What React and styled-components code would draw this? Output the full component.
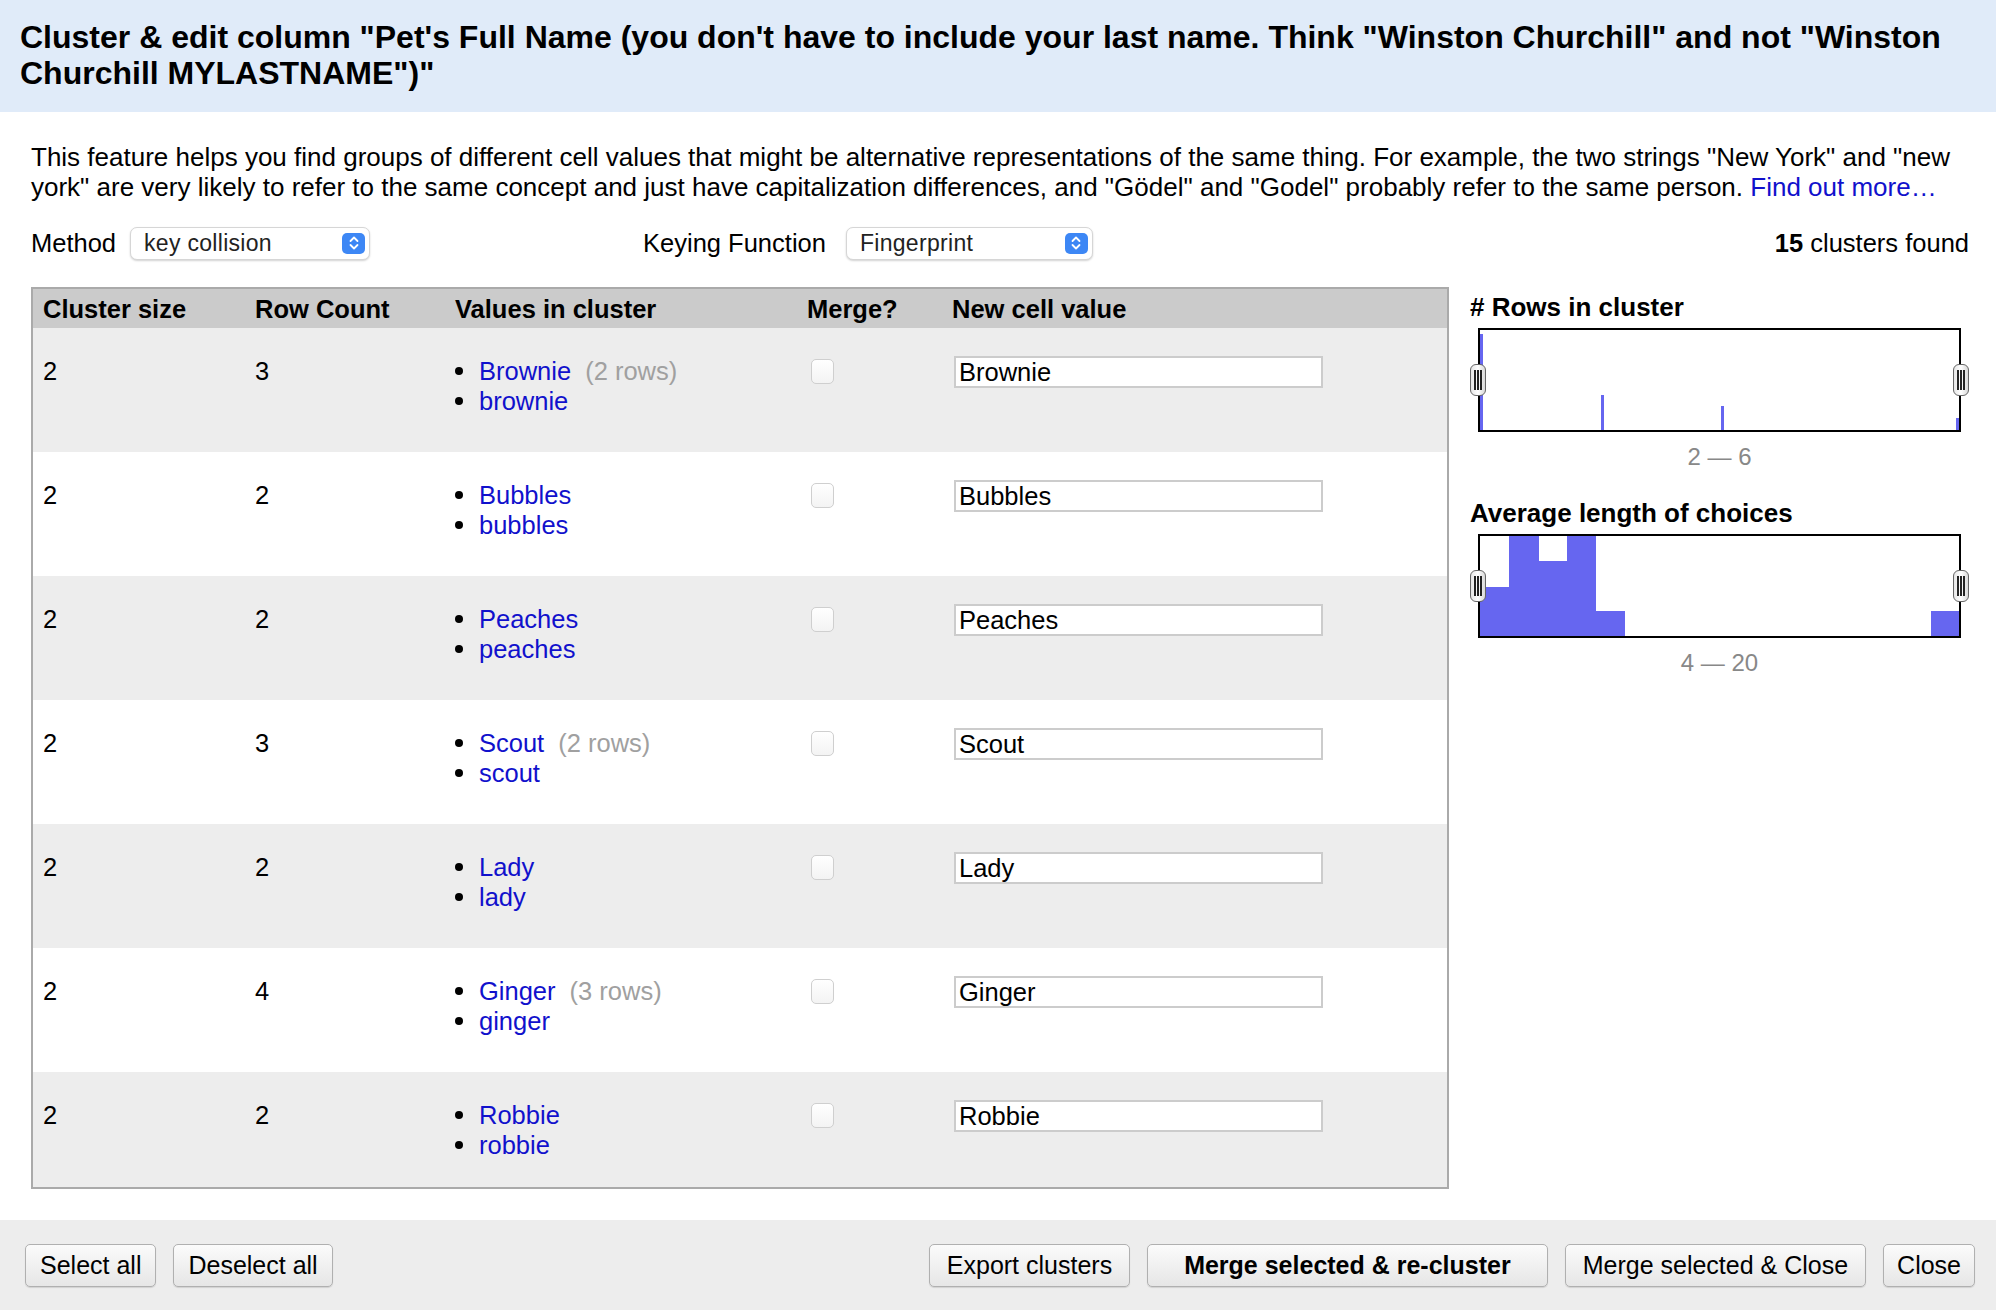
import React from "react";
import styled, { createGlobalStyle } from "styled-components";

const clusters = [
    { size: 2, rows: 3, values: [["Brownie", "2 rows"], ["brownie"]], value: "Brownie" },
    { size: 2, rows: 2, values: [["Bubbles"], ["bubbles"]], value: "Bubbles" },
    { size: 2, rows: 2, values: [["Peaches"], ["peaches"]], value: "Peaches" },
    { size: 2, rows: 3, values: [["Scout", "2 rows"], ["scout"]], value: "Scout" },
    { size: 2, rows: 2, values: [["Lady"], ["lady"]], value: "Lady" },
    { size: 2, rows: 4, values: [["Ginger", "3 rows"], ["ginger"]], value: "Ginger" },
    { size: 2, rows: 2, values: [["Robbie"], ["robbie"]], value: "Robbie" },
];

// histogram bars: [x, width, height] in px inside a 479x100 plot
const rowBars = [[0, 3, 96], [121, 3, 35], [241, 3, 24], [476, 3, 12]];
const lengthBars = [[0, 29, 49], [29, 30, 100], [59, 28, 75], [87, 29, 100], [116, 29, 25], [451, 28, 25]];

const GlobalStyle = createGlobalStyle`
    html, body {
        margin: 0;
        padding: 0;
        background: #fff;
        font-family: "Liberation Sans", Arial, sans-serif;
        color: #000;
    }
    * { box-sizing: border-box; }
`;

const Page = styled.div`
    width: 1996px;
    height: 1310px;
    display: flex;
    flex-direction: column;
    overflow: hidden;
`;

const Header = styled.header`
    background: #e0ebf9;
    height: 112px;
    padding: 19px 20px 0;
`;

const Title = styled.h1`
    margin: 0;
    font-size: 32px;
    line-height: 36px;
    font-weight: bold;
`;

const Body = styled.div`
    flex: 1;
    padding: 30px 27px 0 31px;
    display: flex;
    flex-direction: column;
`;

const Intro = styled.p`
    margin: 0;
    font-size: 26px;
    line-height: 30px;
`;

const Link = styled.a`
    color: #1111cc;
    text-decoration: none;
`;

const Controls = styled.div`
    margin-top: 24px;
    height: 34px;
    display: flex;
    align-items: center;
    font-size: 25.5px;
`;

const Label = styled.span`
    margin-right: ${p => p.gap || 14}px;
`;

const Select = styled.div`
    width: ${p => p.w}px;
    height: 33px;
    display: flex;
    align-items: center;
    justify-content: space-between;
    padding: 0 4px 0 13px;
    background: #fff;
    border: 1px solid #d6d6d6;
    border-radius: 7px;
    box-shadow: 0 1px 2px rgba(0, 0, 0, 0.18);
    font-size: 23px;
    color: #222;
    letter-spacing: 0.3px;
`;

const Stepper = styled.span`
    width: 23px;
    height: 21px;
    border-radius: 5px;
    background: #3d87f5;
    display: flex;
    align-items: center;
    justify-content: center;
`;

const Spacer = styled.div`
    width: ${p => p.w}px;
`;

const Found = styled.div`
    margin-left: auto;
    b { font-weight: bold; }
`;

const Main = styled.div`
    margin-top: 27px;
    display: flex;
    gap: 21px;
`;

const TableBox = styled.div`
    width: 1418px;
    height: 902px;
    border: 2px solid #aaa;
    overflow: hidden;
`;

const Row = styled.div`
    display: grid;
    grid-template-columns: 212px 200px 352px 145px 1fr;
    background: ${p => p.head ? "#cbcbcb" : p.odd ? "#ededed" : "#fff"};
    height: ${p => p.head ? 39 : 124}px;
    align-items: ${p => p.head ? "center" : "start"};
    padding-top: ${p => p.head ? 0 : 28}px;
    font-size: 25.5px;
    line-height: 30px;
`;

const HeadCell = styled.div`
    padding-left: 10px;
    font-weight: bold;
`;

const Cell = styled.div`
    padding-left: 10px;
`;

const Values = styled.ul`
    margin: 0;
    padding: 0;
    list-style: none;
`;

const Value = styled.li`
    display: flex;
    align-items: center;
    &::before {
        content: "";
        width: 8px;
        height: 8px;
        border-radius: 50%;
        background: #000;
        margin: 0 16px 0 0;
    }
    a { color: #1111cc; }
    span {
        color: #a0a0a0;
        margin-left: 14px;
    }
`;

const Check = styled.span`
    display: block;
    margin: 3px 0 0 4px;
    width: 23px;
    height: 25px;
    border: 1px solid #cfcfcf;
    border-radius: 5px;
    background: linear-gradient(#fff, #f3f3f3);
`;

const ValueInput = styled.div`
    margin: 0 0 0 2px;
    width: 369px;
    height: 32px;
    border: 2px solid #cccccc;
    background: #fff;
    padding: 0 0 0 3px;
    line-height: 28px;
    font-size: 25.5px;
`;

const Side = styled.div`
    width: 499px;
    display: flex;
    flex-direction: column;
`;

const ChartTitle = styled.h3`
    margin: ${p => p.first ? 5 : 26}px 0 6px;
    font-size: 26px;
    line-height: 30px;
    font-weight: bold;
`;

const Chart = styled.div`
    position: relative;
    margin-left: 8px;
    width: 483px;
    height: 104px;
`;

const Handle = styled.span`
    position: absolute;
    top: 36px;
    ${p => p.right ? "right: -8px;" : "left: -8px;"}
    width: 16px;
    height: 32px;
    border: 1px solid #666;
    border-radius: 6px;
    background: linear-gradient(90deg, #e6e6e6, #fff 50%, #d8d8d8);
    display: flex;
    align-items: center;
    justify-content: center;
    gap: 1.5px;
    i {
        width: 1.5px;
        height: 20px;
        background: #222;
    }
`;

const Range = styled.div`
    margin-left: 8px;
    width: 483px;
    text-align: center;
    font-size: 24px;
    line-height: 30px;
    color: #888;
    margin-top: 10px;
`;

const Footer = styled.footer`
    height: 90px;
    background: #ededed;
    display: flex;
    align-items: flex-start;
    padding: 24px 21px 0 25px;
    gap: 17px;
`;

const Button = styled.button`
    height: 43px;
    padding: 0 ${p => p.px || 14}px;
    font-family: "Liberation Sans", Arial, sans-serif;
    font-size: 25px;
    font-weight: ${p => p.primary ? "bold" : "normal"};
    color: #000;
    border: 1px solid #b0b0b0;
    border-radius: 5px;
    background: linear-gradient(#fbfbfb, #e6e6e6);
    box-shadow: 0 1px 1px rgba(0, 0, 0, 0.12);
    ${p => p.push ? "margin-left: auto;" : ""}
`;

const StepIcon = () => (
    <svg width="12" height="16" viewBox="0 0 12 16">
        <path d="M2.5 6 L6 2.5 L9.5 6 M2.5 10 L6 13.5 L9.5 10" fill="none" stroke="#fff" strokeWidth="1.8" strokeLinecap="round" strokeLinejoin="round" />
    </svg>
);

const Histogram = ({ bars }) => (
    <Chart>
        <svg width="483" height="104" viewBox="0 0 483 104">
            <rect x="1" y="1" width="481" height="102" fill="#fff" stroke="#000" strokeWidth="2" />
            {bars.map(([x, w, h], i) => (
                <rect key={i} x={2 + x} y={102 - h} width={w} height={h} fill="#6666f0" />
            ))}
        </svg>
        <Handle><i /><i /><i /></Handle>
        <Handle right><i /><i /><i /></Handle>
    </Chart>
);

const App = () => {
    return (
        <Page>
            <GlobalStyle />
            <Header>
                <Title>Cluster &amp; edit column "Pet's Full Name (you don't have to include your last name. Think "Winston Churchill" and not "Winston Churchill MYLASTNAME")"</Title>
            </Header>
            <Body>
                <Intro>
                    This feature helps you find groups of different cell values that might be alternative representations of the same thing. For example, the two strings "New York" and "new york" are very likely to refer to the same concept and just have capitalization differences, and "Gödel" and "Godel" probably refer to the same person. <Link href="#">Find out more…</Link>
                </Intro>
                <Controls>
                    <Label>Method</Label>
                    <Select w={240}>key collision<Stepper><StepIcon /></Stepper></Select>
                    <Spacer w={273} />
                    <Label gap={20}>Keying Function</Label>
                    <Select w={247}>Fingerprint<Stepper><StepIcon /></Stepper></Select>
                    <Found><b>15</b> clusters found</Found>
                </Controls>
                <Main>
                    <TableBox>
                        <Row head>
                            <HeadCell>Cluster size</HeadCell>
                            <HeadCell>Row Count</HeadCell>
                            <HeadCell>Values in cluster</HeadCell>
                            <HeadCell>Merge?</HeadCell>
                            <HeadCell>New cell value</HeadCell>
                        </Row>
                        {clusters.map((c, i) => (
                            <Row key={c.value} odd={i % 2 === 0}>
                                <Cell>{c.size}</Cell>
                                <Cell>{c.rows}</Cell>
                                <Cell>
                                    <Values>
                                        {c.values.map(([v, n]) => (
                                            <Value key={v}><a>{v}</a>{n && <span>({n})</span>}</Value>
                                        ))}
                                    </Values>
                                </Cell>
                                <Cell><Check /></Cell>
                                <Cell><ValueInput>{c.value}</ValueInput></Cell>
                            </Row>
                        ))}
                    </TableBox>
                    <Side>
                        <ChartTitle first># Rows in cluster</ChartTitle>
                        <Histogram bars={rowBars} />
                        <Range>2 — 6</Range>
                        <ChartTitle>Average length of choices</ChartTitle>
                        <Histogram bars={lengthBars} />
                        <Range>4 — 20</Range>
                    </Side>
                </Main>
            </Body>
            <Footer>
                <Button>Select all</Button>
                <Button>Deselect all</Button>
                <Button push px={17}>Export clusters</Button>
                <Button primary px={36}>Merge selected &amp; re-cluster</Button>
                <Button px={17}>Merge selected &amp; Close</Button>
                <Button px={13}>Close</Button>
            </Footer>
        </Page>
    );
};

export default App;
